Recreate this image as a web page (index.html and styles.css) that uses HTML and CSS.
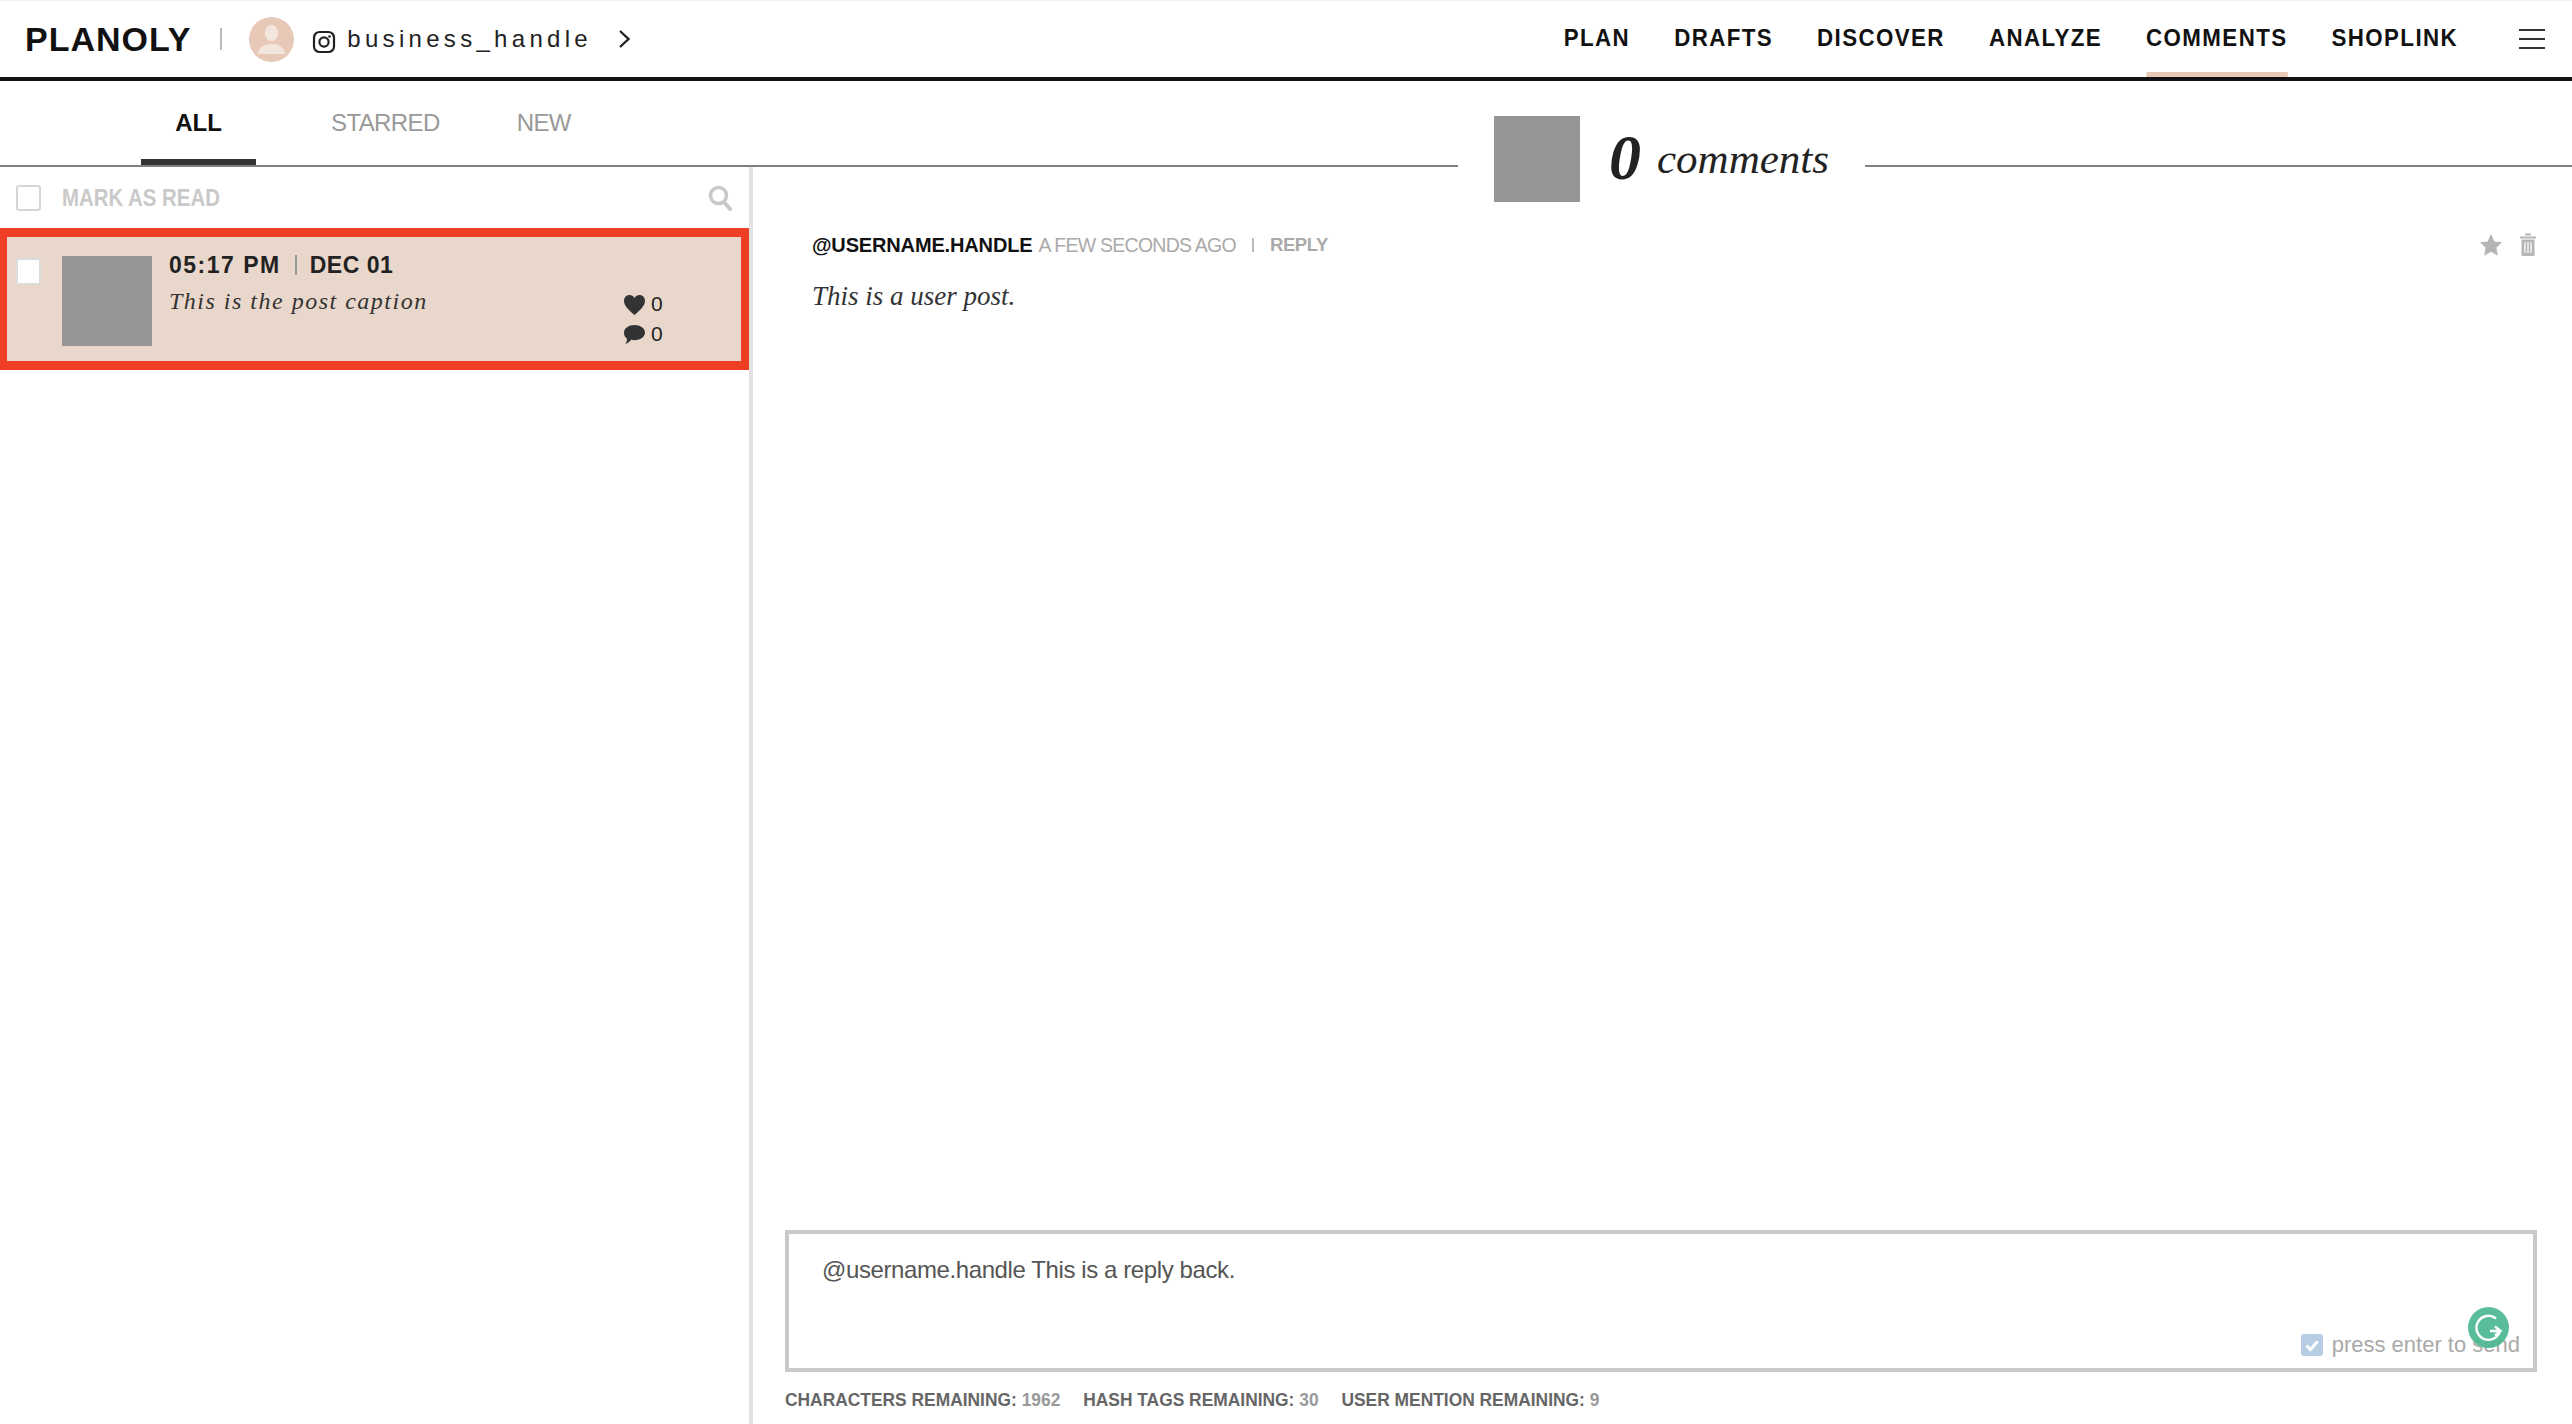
FILE: index.html
```html
<!DOCTYPE html>
<html lang="en">
<head>
<meta charset="utf-8">
<title>Planoly comments</title>
<link rel="stylesheet" href="styles.css">
</head>
<body>
<header class="topbar">
  <div class="brand">
    <span class="logo">PLANOLY</span>
    <span class="brand-sep"></span>
    <span class="avatar">
      <svg viewBox="0 0 45 45" width="45" height="45"><circle cx="22.5" cy="22.5" r="22.5" fill="#e8c9b8"/><ellipse cx="22.5" cy="16" rx="6.500" ry="8" fill="#f3e6de"/><path d="M9 37c1-7 6-10 13.500-10S35 30 36 37z" fill="#f3e6de"/></svg>
    </span>
    <svg class="ig" viewBox="0 0 24 24" width="24" height="24"><rect x="2" y="2" width="20" height="20" rx="5.500" fill="none" stroke="#222" stroke-width="2.200"/><circle cx="12" cy="12" r="4.600" fill="none" stroke="#222" stroke-width="2.200"/><circle cx="17.500" cy="6.500" r="1.300" fill="#222"/></svg>
    <span class="handle">business_handle</span>
    <svg class="chev" viewBox="0 0 13 20" width="13" height="20"><path d="M2 2l8.500 8L2 18" fill="none" stroke="#222" stroke-width="2.400"/></svg>
  </div>
  <nav class="nav">
    <div class="nav-links">
      <a class="nav-item">PLAN</a>
      <a class="nav-item">DRAFTS</a>
      <a class="nav-item">DISCOVER</a>
      <a class="nav-item">ANALYZE</a>
      <a class="nav-item active">COMMENTS</a>
      <a class="nav-item">SHOPLINK</a>
    </div>
    <span class="burger"><i></i><i></i><i></i></span>
  </nav>
</header>
<main class="main">
  <section class="left">
    <div class="tabs">
      <a class="tab on">ALL</a>
      <a class="tab tab-starred">STARRED</a>
      <a class="tab tab-new">NEW</a>
    </div>
    <div class="list">
      <div class="mark-row">
        <span class="check"></span>
        <span class="mark-label">MARK AS READ</span>
        <svg class="search" viewBox="0 0 24 26" width="24" height="26"><circle cx="10.500" cy="10.500" r="8" fill="none" stroke="#c9c9c9" stroke-width="3.600"/><path d="M16 17l6 7" stroke="#c9c9c9" stroke-width="4" stroke-linecap="round"/></svg>
      </div>
      <article class="post">
        <span class="check check-white"></span>
        <div class="post-thumb"></div>
        <div class="post-body">
          <div class="post-time"><span>05:17 PM</span><span class="time-sep"></span><span class="dec">DEC 01</span></div>
          <div class="post-foot">
            <div class="post-caption">This is the post caption</div>
            <div class="post-stats">
              <div class="stat"><svg viewBox="0 0 24 22" width="23" height="21"><path d="M12 22C5 16 1 12 1 7c0-3.500 2.600-6 5.700-6C9 1 11 2.200 12 4.200 13 2.200 15 1 17.300 1 20.400 1 23 3.500 23 7c0 5-4 9-11 15z" fill="#333"/></svg><span>0</span></div>
              <div class="stat"><svg viewBox="0 0 24 22" width="23" height="21"><path d="M12 1c6 0 11 3.300 11 8s-5 8-11 8c-1.200 0-2.300-.1-3.400-.4C7 18.500 5 20.500 2.500 21c1-1.500 1.700-3.300 1.700-5.500C2 14 1 11.800 1 9c0-4.700 5-8 11-8z" fill="#333"/></svg><span>0</span></div>
            </div>
          </div>
        </div>
      </article>
    </div>
  </section>
  <section class="right">
    <div class="head">
      <div class="head-line head-line-short"></div>
      <div class="head-thumb"></div>
      <div class="head-title"><b>0</b><span>comments</span></div>
      <div class="head-line head-line-long"></div>
    </div>
    <div class="thread">
      <div class="comment-meta">
        <span class="user">@USERNAME.HANDLE</span>
        <span class="ago">A FEW SECONDS AGO</span>
        <span class="pipe"></span>
        <span class="reply">REPLY</span>
        <span class="tools">
          <svg viewBox="0 0 24 24" width="24" height="24"><path d="M12 1l3.400 7.400 7.600.9-5.600 5.400 1.500 8L12 18.800 5.100 22.700l1.500-8L1 9.300l7.600-.9z" fill="#b5b5b5"/></svg>
          <svg viewBox="0 0 18 24" width="18" height="24"><path d="M6 1.500h6M1 4.500h16" stroke="#b5b5b5" stroke-width="2" fill="none"/><path d="M2.500 6.500h13V22a1 1 0 0 1-1 1h-11a1 1 0 0 1-1-1z" fill="#b5b5b5"/><path d="M6 9v11M9 9v11M12 9v11" stroke="#fff" stroke-width="1.200"/></svg>
        </span>
      </div>
      <p class="comment-text">This is a user post.</p>
    </div>
    <div class="composer">
      <div class="composer-text">@username.handle This is a reply back.</div>
      <div class="send">
        <span class="send-check"><svg viewBox="0 0 22 22" width="22" height="22"><rect width="22" height="22" rx="3" fill="#b6cde3"/><path d="M5.500 11.500l4 4 7-8" fill="none" stroke="#fff" stroke-width="3"/></svg></span>
        <span>press enter to send</span>
      </div>
      <svg class="grammarly" viewBox="0 0 41 41" width="41" height="41"><circle cx="20.500" cy="20.500" r="20.500" fill="#4cb892" fill-opacity=".93"/><path d="M28 11.500A12 12 0 1 0 32 24H22" fill="none" stroke="#fff" stroke-width="2.400"/><path d="M27 19.500l5.500 4.500-5.500 4.500" fill="none" stroke="#fff" stroke-width="2.400"/></svg>
    </div>
    <div class="limits">
      <span>CHARACTERS REMAINING: <em>1962</em></span>
      <span>HASH TAGS REMAINING: <em>30</em></span>
      <span>USER MENTION REMAINING: <em>9</em></span>
    </div>
  </section>
</main>
</body>
</html>
```
FILE: styles.css
```css
* { box-sizing: border-box; }
html, body { margin: 0; height: 100%; }
body {
  width: 2572px;
  height: 1424px;
  overflow: hidden;
  background: #fff;
  color: #222;
  font-family: "Liberation Sans", sans-serif;
  display: flex;
  flex-direction: column;
}

/* top bar */
.topbar {
  height: 81px;
  flex: none;
  display: flex;
  justify-content: space-between;
  border-top: 1px solid #f2f2f2;
  border-bottom: 4px solid #111;
}
.brand { display: flex; align-items: center; padding-left: 25px; }
.logo { font-weight: 700; font-size: 34px; letter-spacing: 1px; color: #111; }
.brand-sep { width: 2px; height: 22px; background: #bbb; margin-left: 29px; }
.avatar { display: flex; margin: 1px 0 0 27px; }
.ig { margin-left: 18px; margin-top: 5px; }
.handle { font-size: 24px; letter-spacing: 4.300px; margin-left: 11px; color: #222; }
.chev { margin-left: 26px; }

.nav { display: flex; align-items: stretch; padding-right: 27px; }
.nav-links { display: flex; align-items: stretch; transform: scaleX(.93); transform-origin: right center; }
.nav-item {
  font-weight: 700;
  font-size: 24px;
  letter-spacing: 1.500px;
  color: #111;
  margin-left: 47.400px;
  display: flex;
  align-items: center;
  padding-top: 3px;
  border-bottom: 5px solid transparent;
}
.nav-item.active { border-bottom-color: #e8c9b8; }
.burger { display: flex; flex-direction: column; justify-content: space-between; width: 26px; height: 20px; margin: 28px 0 0 61px; }
.burger i { display: block; height: 2px; background: #333; }

/* layout */
.main { flex: 1; display: flex; min-height: 0; }
.left { width: 753px; flex: none; display: flex; flex-direction: column; }
.right { flex: 1; min-width: 0; display: flex; flex-direction: column; }

/* tabs */
.tabs {
  height: 86px;
  flex: none;
  display: flex;
  border-bottom: 2px solid #808080;
  padding-left: 141px;
}
.tab {
  font-size: 24px;
  letter-spacing: -.6px;
  color: #999;
  height: 84px;
  display: flex;
  align-items: center;
  justify-content: center;
}
.tab.on { width: 115px; color: #111; font-weight: 700; border-bottom: 6px solid #333; padding-top: 6px; letter-spacing: 0; }
.tab-starred { margin-left: 75px; }
.tab-new { margin-left: 77px; }

/* list */
.list { flex: 1; border-right: 4px solid #e2e2e2; }
.mark-row { height: 61px; display: flex; align-items: center; padding: 0 17px 0 16px; }
.check { width: 25px; height: 26px; flex: none; border: 2px solid #d6d6d6; border-radius: 3px; background: #fff; }
.mark-label { font-weight: 700; font-size: 23px; color: #c9c9c9; margin: 2px 0 0 21px; flex: 1; transform: scaleX(.887); transform-origin: left center; }
.post {
  height: 142px;
  background: #ead7cb;
  border-style: solid;
  border-color: #ee3f24;
  border-width: 9px 8px 9px 7px;
  display: flex;
  align-items: flex-start;
  padding: 19px 0 0 9px;
}
.check-white { border-color: #dcdcdc; margin-top: 2px; height: 27px; }
.post-thumb { width: 90px; height: 90px; flex: none; background: #969696; margin-left: 21px; }
.post-body { margin-left: 17px; flex: 1; }
.post-time { display: flex; align-items: center; font-weight: 700; font-size: 23px; letter-spacing: 1.500px; color: #222; height: 18px; }
.dec { letter-spacing: .5px; margin-left: -1px; }
.time-sep { width: 2px; height: 20px; background: #999; margin: 0 14px; }
.post-foot { display: flex; }
.post-caption { font-family: "Liberation Serif", serif; font-style: italic; font-size: 24px; letter-spacing: 1.500px; color: #333; width: 454px; margin-top: 14px; }
.post-stats { margin-top: 15px; }
.stat { display: flex; align-items: center; gap: 5px; height: 30px; font-size: 21px; color: #222; }

/* thread header */
.head { height: 123px; flex: none; display: flex; align-items: flex-start; }
.head-line { height: 86px; border-bottom: 2px solid #808080; }
.head-line-short { width: 705px; }
.head-line-long { flex: 1; }
.head-thumb { width: 86px; height: 86px; flex: none; background: #969696; margin: 35px 0 0 36px; }
.head-title { flex: none; width: 285px; height: 123px; padding: 31px 0 0 29px; display: flex; align-items: center; font-family: "Liberation Serif", serif; font-style: italic; color: #222; }
.head-title b { font-size: 64px; margin-right: 16px; }
.head-title span { font-size: 43px; }

/* thread */
.thread { flex: 1; padding: 26px 35px 0 59px; }
.comment-meta { display: flex; align-items: center; height: 30px; font-size: 20px; }
.user { font-weight: 700; color: #111; letter-spacing: -.15px; }
.ago { color: #aaa; margin-left: 6px; font-size: 19.500px; letter-spacing: -.75px; }
.pipe { width: 2px; height: 14px; background: #bbb; margin: 0 16px; }
.reply { font-weight: 700; font-size: 18.500px; color: #aaa; letter-spacing: -.4px; }
.tools { margin-left: auto; display: flex; align-items: center; gap: 16px; }
.comment-text { margin: 21px 0 0; font-family: "Liberation Serif", serif; font-style: italic; font-size: 27px; color: #333; }

/* composer */
.composer { position: relative; height: 142px; flex: none; margin: 0 35px 0 32px; border: 4px solid #c9c9c9; padding: 22px 0 0 33px; }
.composer-text { font-size: 24px; letter-spacing: -.4px; color: #555; }
.send { position: absolute; right: 13px; bottom: 10px; display: flex; align-items: center; gap: 9px; font-size: 22px; color: #aaa; }
.send-check { display: flex; }
.grammarly { position: absolute; right: 24px; bottom: 20px; }

/* limits */
.limits { height: 52px; flex: none; display: flex; align-items: center; gap: 25px; padding: 4px 0 0 32px; font-weight: 700; font-size: 19px; color: #666; transform: scaleX(.915); transform-origin: 32px center; }
.limits em { font-style: normal; color: #999; }
```
